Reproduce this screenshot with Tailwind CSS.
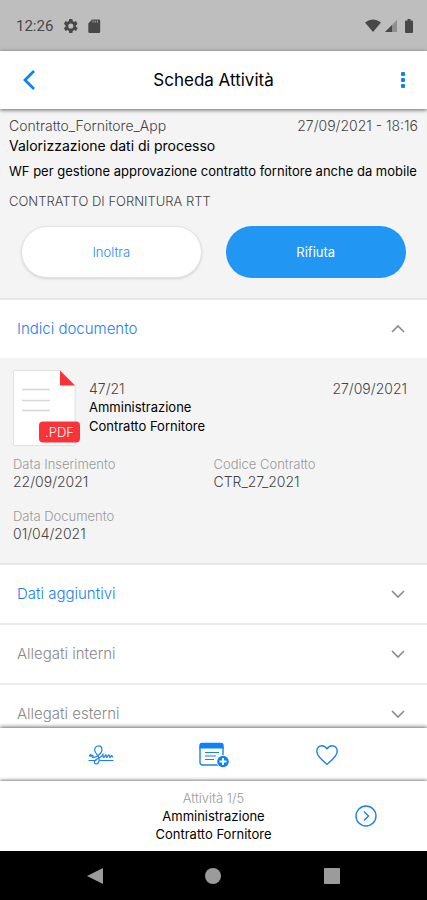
<!DOCTYPE html>
<html lang="it">
<head>
<meta charset="utf-8">
<meta name="viewport" content="width=device-width, initial-scale=1">
<title>Scheda Attività</title>
<script src="https://cdn.jsdelivr.net/npm/@tailwindcss/browser@4"></script>
</head>
<body class="flex h-screen flex-col overflow-hidden bg-white font-['Inter','Roboto',sans-serif] text-sm font-light text-[#444]">

<div class="flex h-[51px] shrink-0 items-center bg-[#bebebe] px-4 pt-px font-['Roboto',sans-serif] text-[#484848]">
  <span class="text-[15px] leading-5 font-normal">12:26</span>
  <svg class="ml-[9px] size-4" viewBox="2 2 20 20" fill="currentColor" aria-hidden="true"><path fill-rule="evenodd" d="M19.4 13a7.500 7.500 0 0 0 0-2l2.100-1.600-2-3.500-2.500 1a7.500 7.500 0 0 0-1.700-1L15 3.200h-4l-.4 2.700a7.500 7.500 0 0 0-1.700 1l-2.500-1-2 3.500L6.500 11a7.500 7.500 0 0 0 0 2l-2.100 1.600 2 3.500 2.500-1c.5.4 1.100.8 1.700 1l.4 2.700h4l.4-2.700c.6-.2 1.200-.6 1.700-1l2.500 1 2-3.500zM13 15.200a3.200 3.200 0 1 1 0-6.400 3.200 3.200 0 0 1 0 6.400z"/></svg>
  <svg class="ml-2 size-4" viewBox="0 0 16 16" fill="currentColor" aria-hidden="true"><path d="M6 1.500h7A1.200 1.200 0 0 1 14.200 2.700v11a1.200 1.200 0 0 1-1.200 1.200H3.500a1.200 1.200 0 0 1-1.200-1.200V5.500z"/><path stroke="#bebebe" stroke-width=".8" d="M7 2.500v2.200M9.200 2.500v2.200M11.400 2.500v2.200"/></svg>
  <svg class="ml-auto size-4" viewBox="0 0 16 16" fill="currentColor" aria-hidden="true"><path d="M0 4.500Q8-1.500 16 4.500L8 14z"/></svg>
  <svg class="ml-1 h-3 w-3" viewBox="0 0 12 12" fill="currentColor" aria-hidden="true"><path opacity=".4" d="M0 12 12 0v12z"/><path d="M0 12 7 5v7z"/></svg>
  <svg class="mr-[-2px] ml-2 h-[14px] w-2" viewBox="0 0 8 14" fill="currentColor" aria-hidden="true"><path d="M2.500 0h3v1.500H7a1 1 0 0 1 1 1V13a1 1 0 0 1-1 1H1a1 1 0 0 1-1-1V2.500a1 1 0 0 1 1-1h1.500z"/></svg>
</div>

<header class="relative z-10 flex h-[58px] shrink-0 items-center justify-between bg-white px-4 shadow-[0_1px_4px_rgba(0,0,0,0.6)]">
  <button type="button" aria-label="Indietro" class="flex h-7 w-[26px] items-center justify-center text-[#0b84f3]">
    <svg class="h-5 w-3" viewBox="0 0 12 20" fill="none" stroke="currentColor" stroke-width="2.800" aria-hidden="true"><path d="M11 1 2 10l9 9"/></svg>
  </button>
  <h1 class="text-[17px] leading-6 font-normal text-black">Scheda Attività</h1>
  <button type="button" aria-label="Altre opzioni" class="flex h-7 w-[26px] items-center justify-end pr-[6px] text-[#0b84f3]">
    <svg class="h-4 w-1" viewBox="0 0 4 16" fill="currentColor" aria-hidden="true"><rect width="4" height="4" rx="1"/><rect y="6" width="4" height="4" rx="1"/><rect y="12" width="4" height="4" rx="1"/></svg>
  </button>
</header>

<main class="min-h-0 flex-1 overflow-hidden">
  <section class="border-b-2 border-[#e6e6e6] bg-[#f4f4f4] px-[9px] pt-[7px] pb-5">
    <div class="flex justify-between leading-5"><p>Contratto_Fornitore_App</p><p>27/09/2021 - 18:16</p></div>
    <h2 class="text-sm leading-5 font-normal text-black">Valorizzazione dati di processo</h2>
    <p class="mt-[5px] text-[13px] leading-5 font-normal whitespace-nowrap text-black">WF per gestione approvazione contratto fornitore anche da mobile</p>
    <p class="mt-[10px] text-[13px] leading-5">CONTRATTO DI FORNITURA RTT</p>
    <div class="mt-[15px] grid grid-cols-2 gap-6 px-3">
      <button type="button" class="h-[52px] rounded-full border border-[#e2e2e2] bg-white text-[13px] text-[#2b86f5] shadow-sm">Inoltra</button>
      <button type="button" class="h-[52px] rounded-full bg-[#2196f3] text-[13px] font-normal text-white">Rifiuta</button>
    </div>
  </section>

  <button type="button" aria-expanded="true" class="flex h-[58px] w-full items-center justify-between bg-white px-[17px] text-[15px] text-[#1b80ee]">
    <span>Indici documento</span>
    <svg class="mr-1 h-2 w-4" viewBox="0 0 16 8" fill="none" stroke="#888" stroke-width="1.600" aria-hidden="true"><path d="M2 7l6-6 6 6"/></svg>
  </button>
  <section class="border-b-2 border-[#e6e6e6] bg-[#f4f4f4] px-[13px] pt-3 pb-5">
    <div class="flex">
      <svg class="h-[78px] w-[68px] shrink-0" viewBox="0 1 68 78" role="img" aria-label="Documento PDF">
        <path d="M.5 1.500H47l15 15V76.500H.5z" fill="#fff" stroke="#e0e0e0"/>
        <path d="M47 1.500v15h15z" fill="#fb3338"/>
        <path d="M9 20.500h28M9 31.500h28M9 41.500h28" stroke="#d6d6d6" stroke-width="1.500"/>
        <rect x="26" y="52.500" width="41" height="21" rx="4" fill="#fb3338"/>
        <text x="46.500" y="67.500" text-anchor="middle" font-family="Inter" font-size="13" fill="#fff">.PDF</text>
      </svg>
      <div class="ml-2 flex-1 pt-[10px] leading-[19px]">
        <div class="flex justify-between pr-[7px] leading-[18px]"><p>47/21</p><p>27/09/2021</p></div>
        <p class="text-[13px] leading-[19px] font-normal text-black">Amministrazione</p>
        <p class="text-[13px] leading-[19px] font-normal text-black">Contratto Fornitore</p>
      </div>
    </div>
    <dl class="mt-[7px] grid grid-cols-2 gap-y-4 text-[13px] leading-[18px]">
      <div><dt class="text-[#999]">Data Inserimento</dt><dd class="text-sm leading-[18px]">22/09/2021</dd></div>
      <div><dt class="text-[#999]">Codice Contratto</dt><dd class="text-sm leading-[18px]">CTR_27_2021</dd></div>
      <div><dt class="text-[#999]">Data Documento</dt><dd class="text-sm leading-[18px]">01/04/2021</dd></div>
    </dl>
  </section>

  <button type="button" aria-expanded="false" class="flex h-[60px] w-full items-center justify-between border-b-2 border-[#ebebeb] bg-white px-[17px] text-[15px] text-[#1b80ee]">
    <span>Dati aggiuntivi</span>
    <svg class="mr-1 h-2 w-4" viewBox="0 0 16 8" fill="none" stroke="#888" stroke-width="1.600" aria-hidden="true"><path d="M2 1l6 6 6-6"/></svg>
  </button>
  <button type="button" aria-expanded="false" class="flex h-[60px] w-full items-center justify-between border-b-2 border-[#ebebeb] bg-white px-[17px] text-[15px] text-[#888]">
    <span>Allegati interni</span>
    <svg class="mr-1 h-2 w-4" viewBox="0 0 16 8" fill="none" stroke="#888" stroke-width="1.600" aria-hidden="true"><path d="M2 1l6 6 6-6"/></svg>
  </button>
  <button type="button" aria-expanded="false" class="flex h-[60px] w-full items-center justify-between border-b-2 border-[#ebebeb] bg-white px-[17px] text-[15px] text-[#888]">
    <span>Allegati esterni</span>
    <svg class="mr-1 h-2 w-4" viewBox="0 0 16 8" fill="none" stroke="#888" stroke-width="1.600" aria-hidden="true"><path d="M2 1l6 6 6-6"/></svg>
  </button>
</main>

<div class="relative z-10 grid h-[53px] shrink-0 grid-cols-3 items-center bg-white px-11 text-[#1b80ee] shadow-[0_-1px_4px_rgba(0,0,0,0.6)]">
  <button type="button" aria-label="Firma" class="flex justify-center">
    <svg class="h-5 w-[26px]" viewBox="0 0 26 20" fill="none" stroke="currentColor" stroke-width="1.200" stroke-linecap="round" aria-hidden="true"><path d="M1 15.500h7M12 15.500h13"/><path d="M1.500 11c1-2.500 2.200-1.500 1.200 1 1.300-2.500 2.800-2 2 .3 3 .5 8-2.300 9-6.300C14.700 2 12 .2 9.500 1 6.500 2 6 5 7.500 7.500c1.500 2 3.500 3.500 3.700 6.500.2 3-1.200 5-3 5-2 0-2.500-2.500-.7-4 2.500-2 6-2.500 7.500-5.500.3 1.500-.3 3 .7 3s1.300-3 2.300-2.500-.3 2.500.7 2.500 1.300-3 2.300-2.500 0 2.500 1 2.500 1-2.500 1.800-2 .2 1.500 1 1.500"/></svg>
  </button>
  <button type="button" aria-label="Aggiungi nota" class="flex justify-center">
    <svg class="h-[26px] w-[30px]" viewBox="0 0 30 26" aria-hidden="true"><path d="M1 5V20.500a2.500 2.500 0 0 0 2.500 2.500H20M24 5v9" fill="none" stroke="currentColor" stroke-width="1.400"/><path d="M.3 6.500V3A2.500 2.500 0 0 1 2.800.8H22.200A2.500 2.500 0 0 1 24.700 3V6.500z" fill="#0b84f3"/><path d="M6 10.500h14M6 14h11M6 17.500h9" stroke="currentColor" stroke-width="1.200"/><circle cx="24" cy="19.500" r="6.500" fill="#fff"/><circle cx="24" cy="19.500" r="5.800" fill="#0b84f3"/><path d="M24 16v7M20.500 19.500h7" stroke="#fff" stroke-width="1.800"/></svg>
  </button>
  <button type="button" aria-label="Aggiungi ai preferiti" class="flex justify-center">
    <svg class="h-5 w-[22px]" viewBox="0 0 22 20" fill="none" stroke="currentColor" stroke-width="1.400" stroke-linejoin="round" aria-hidden="true"><path d="M11 4C9.500 1.500 7.500.8 5.800.8 3 .8.800 3 .800 6.200c0 5 5.500 9 10.200 13 4.700-4 10.200-8 10.200-13C21.200 3 19 .8 16.200.8 14.500.8 12.500 1.500 11 4z"/></svg>
  </button>
</div>

<footer class="relative z-10 grid h-[70px] shrink-0 grid-cols-[1fr_auto_1fr] items-center bg-white shadow-[0_-1px_3px_rgba(0,0,0,0.5)]">
  <div class="col-start-2 text-center text-[13px] leading-[18px] font-normal text-black">
    <p class="font-light text-[#999]">Attività 1/5</p>
    <p>Amministrazione</p>
    <p>Contratto Fornitore</p>
  </div>
  <button type="button" aria-label="Attività successiva" class="mr-[50px] justify-self-end text-[#1b80ee]">
    <svg class="size-[22px]" viewBox="0 0 22 22" fill="none" stroke="currentColor" stroke-width="1.400" aria-hidden="true"><circle cx="11" cy="11" r="10"/><path d="M9 6.500l4.500 4.500L9 15.500"/></svg>
  </button>
</footer>

<nav aria-label="Navigazione di sistema" class="relative z-20 grid h-[49px] shrink-0 grid-cols-3 items-center bg-black px-9 text-[#9b9b9b]">
  <button type="button" aria-label="Indietro di sistema" class="flex justify-center"><svg class="h-[18px] w-4" viewBox="0 0 16 18" fill="currentColor" aria-hidden="true"><path d="M16 1v16L0 9z"/></svg></button>
  <button type="button" aria-label="Home" class="flex justify-center"><span class="size-4 rounded-full bg-[#9b9b9b]"></span></button>
  <button type="button" aria-label="App recenti" class="flex justify-center"><span class="size-4 rounded-[1px] bg-[#9b9b9b]"></span></button>
</nav>
</body>
</html>
